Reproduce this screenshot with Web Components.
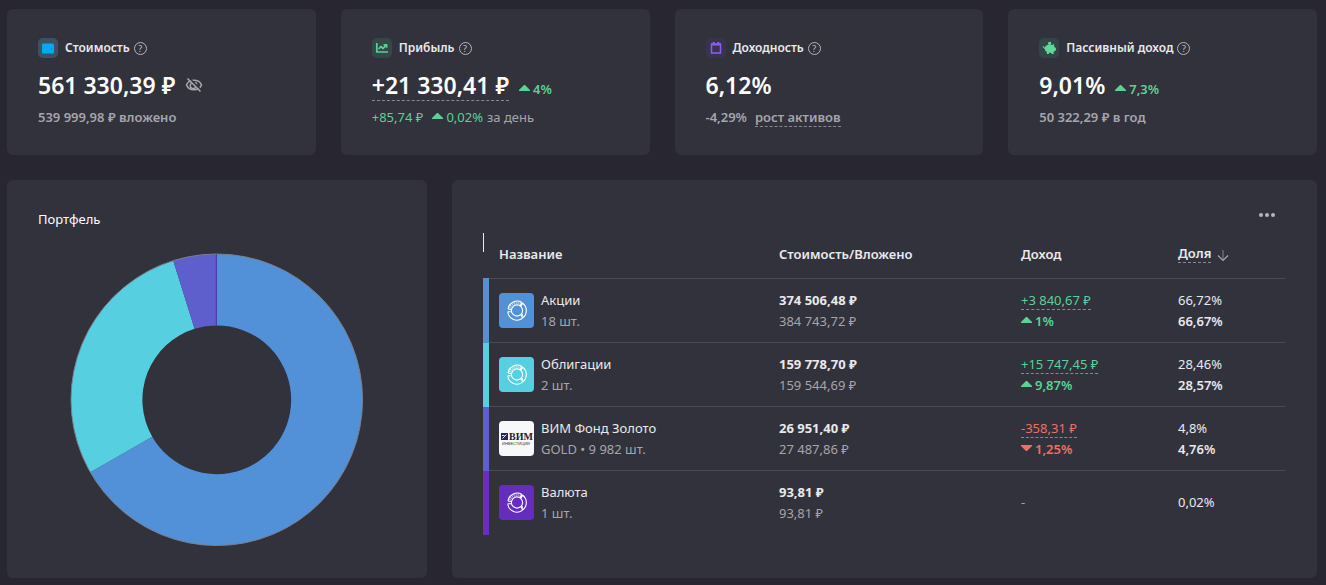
<!DOCTYPE html>
<html lang="ru">
<head>
<meta charset="utf-8">
<title>Портфель</title>
<style>
html{background:#282731}
body{margin:0;background:#282731;color:#e9e9ec;font:400 14px/20px "Noto Sans","Open Sans",sans-serif}
</style>
</head>
<body>
<portfolio-page></portfolio-page>
<script>
const define = (name, html, setup) => customElements.define(name, class extends HTMLElement {
  connectedCallback() {
    if (this.shadowRoot) return;
    const t = document.createElement('template');
    t.innerHTML = typeof html === 'function' ? html(this) : html;
    this.attachShadow({mode: 'open'}).append(t.content.cloneNode(true));
    if (setup) setup(this);
  }
});

const ICONS = {
  wallet: ['#3c5264', '<path fill="#03a9f4" d="M5 5.400h10.200v1h.8v8.400q0 .8-.8.8H4.800q-.8 0-.8-.8V6.200q0-.8 1-.8z"/><circle cx="13.500" cy="11" r=".7" fill="#2c6f93"/>'],
  chart: ['#354747', '<path fill="none" stroke="#5bd197" stroke-width="1.700" stroke-linejoin="round" d="M4.800 5v9h11.200M6.600 11l2.300-2.500 2.200 2 3-3.300M11.600 6.800h3v3"/>'],
  calendar: ['#3a3350', '<path fill="none" stroke="#8a5ff0" stroke-width="1.500" d="M5.500 6.200h9v8.800h-9z"/><path stroke="#8a5ff0" stroke-width="2" d="M5 6.500h10M7.700 4v2M12.300 4v2"/>'],
  piggy: ['#344548', '<path fill="#5fd79d" d="M7.600 7.300c1.700-.9 4-.9 5.600-.2l2-1-.2 2 .9 1.400 1 .3v2.700l-1.300.5-1 1v2h-2.200v-1.300H9.900V16H7.800v-2.100c-1.200-.8-1.900-1.800-2-3L4 9.600l-.3-1.500.9-.2.2 1.100 1.100.5c.3-.9.900-1.700 1.700-2.200z"/><circle cx="10.600" cy="5.300" r="1.600" fill="#5fd79d"/>']
};

define('metric-icon', el => {
  const [bg, art] = ICONS[el.getAttribute('name')];
  return `<style>:host{display:block;width:20px;height:20px;border-radius:5px;background:${bg}}svg{display:block}</style>
  <svg width="20" height="20" viewBox="0 0 20 20" aria-hidden="true">${art}</svg>`;
});

define('help-button', `<style>:host{display:block}
button{box-sizing:border-box;display:block;width:13px;height:13px;padding:0;border:1px solid #b4b4ba;border-radius:50%;background:none;color:#c0c0c6;font:400 9px/11px "Noto Sans",sans-serif;text-align:center}</style>
<button type="button" aria-label="Подсказка">?</button>`);

define('trend-value', el => `<style>
:host{display:inline-flex;align-items:center;gap:3px;color:#5bd197}
:host([down]){color:#ee6f67}
svg{display:block;margin-bottom:3px}</style>
<svg width="11" height="6" viewBox="0 0 11 6" aria-hidden="true"><path fill="currentColor" d="${el.hasAttribute('down') ? 'M0 0h11v1L6 6H5L0 1z' : 'M0 6h11V5L6 0H5L0 5z'}"/></svg><span><slot></slot></span>`);

define('metric-card', `<style>
:host{display:block;box-sizing:border-box;min-width:0;padding:29px 31px 28px;border-radius:6px;background:#32323c;white-space:nowrap}
header{display:flex;align-items:center;height:20px}
h2{margin:0 4px 0 7px;font:600 12px/20px "Noto Sans",sans-serif;color:#e9e9ec}
.value{display:flex;align-items:center;gap:10px;height:32px;margin-top:11px;font-size:23px;line-height:32px;font-weight:600;color:#fff}
.note{display:flex;align-items:center;height:20px;margin-top:6px;font-size:13px;color:#a5a5ad}
</style>
<header><slot name="icon"></slot><h2><slot name="title"></slot></h2><help-button></help-button></header>
<div class="value"><slot name="value"></slot></div>
<div class="note"><slot></slot></div>`);

define('donut-chart', `<style>:host{display:block}svg{display:block;width:100%;height:auto}</style>
<svg viewBox="0 0 294 294" role="img" aria-label="Структура портфеля"></svg>`, el => {
  const parts = [[66.720,'#5290d8'],[28.460,'#56d0e1'],[4.800,'#5e5ecd'],[.02,'#4f2cb0']];
  const pt = (r, p) => { const a = p / 100 * 2 * Math.PI; return (147 + r * Math.sin(a)).toFixed(2) + ' ' + (147 - r * Math.cos(a)).toFixed(2); };
  let at = 0, out = '';
  for (const [share, colour] of parts) {
    const end = at + share, big = share > 50 ? 1 : 0;
    out += `<path fill="${colour}" d="M${pt(146, at)}A146 146 0 ${big} 1 ${pt(146, end)}L${pt(74.5, end)}A74.500 74.500 0 ${big} 0 ${pt(74.5, at)}z"/>`;
    at = end;
  }
  out += '<circle cx="147" cy="147" r="146" fill="none" stroke="#77808f" stroke-width="1"/><path stroke="#4f36b5" d="M146.500 1v71.500"/>';
  el.shadowRoot.querySelector('svg').innerHTML = out;
});

define('asset-logo', el => {
  const tone = el.getAttribute('tone');
  const ring = `<g fill="none" stroke="#fff" stroke-width="1.100"><circle cx="18" cy="17.500" r="5.600"/><path d="M9 16a9.300 9.300 0 0 1 14-6.600l-2 3.400M9 16l3.500.6M8.700 18.800a9.300 9.300 0 0 0 14.500 6.700M8.700 18.800h3.600M23.800 10.200a9.300 9.300 0 0 1 0 14.600l-2-3M23.800 10.200l-2 3M23.200 25.500V21"/><path stroke-width="2.600" stroke-opacity=".6" stroke-dasharray="1 1" d="M10.800 15a7.600 7.600 0 0 1 10.700-4.300"/></g>`;
  const vim = `<path fill="#252b55" d="M2 12h7v7H2z"/><path fill="none" stroke="#dfe4ff" d="M3.500 17.500l4-4M3 14.500h2.500"/><text x="10" y="19" font-family="Liberation Serif,serif" font-weight="700" font-size="10" fill="#20222e">ВИМ</text><text x="3" y="24" font-family="Liberation Sans,sans-serif" font-size="4" fill="#30323e">ИНВЕСТИЦИИ</text>`;
  return `<style>:host{display:block;flex:none;width:35px;height:35px;border-radius:4px;background:${tone};overflow:hidden}svg{display:block}</style>
  <svg width="35" height="35" viewBox="0 0 35 35" aria-hidden="true">${el.hasAttribute('vim') ? vim : ring}</svg>`;
});

const ASSETS = [
  ['#5290d8','#5290d8','','Акции','18 шт.','374 506,48 ₽','384 743,72 ₽','+3 840,67 ₽','1%','','66,72%','66,67%'],
  ['#56d0e1','#56d0e1','','Облигации','2 шт.','159 778,70 ₽','159 544,69 ₽','+15 747,45 ₽','9,87%','','28,46%','28,57%'],
  ['#5e5ecd','#f8f8fa','vim','ВИМ Фонд Золото','GOLD • 9 982 шт.','26 951,40 ₽','27 487,86 ₽','-358,31 ₽','1,25%','down','4,8%','4,76%'],
  ['#6a2dbd','#652dbd','','Валюта','1 шт.','93,81 ₽','93,81 ₽','','','','0,02%','']
];

define('asset-table', `<style>
:host{display:block}
table{width:100%;border-collapse:collapse;table-layout:fixed}
th,td{padding:0;text-align:left;font-weight:400;white-space:nowrap}
thead th{height:34px;font-weight:600;font-size:13px;line-height:20px;vertical-align:top}
tr>:first-child{padding-left:10px}
thead tr>:first-child{padding-left:13px}
.c1{width:293px}.c2{width:242px}.c3{width:157px}
tbody tr{height:64px}
tbody td{border-top:1px solid #4a4a54;font-size:13px;line-height:21px}
tbody td:first-child{border-left:6px solid var(--tone)}
.asset{display:flex;align-items:center;gap:7px}
b{display:block;font-weight:600}
.now{font-weight:700}
.muted{color:#a5a5ad}
.line{display:block}
.under{display:inline-block;line-height:18px;border-bottom:1px dashed #888891}
.gain{color:#5bd197}.loss{color:#ee6f67}
trend-value{display:flex;font-weight:600}
button{display:flex;align-items:center;gap:6px;padding:0;border:0;background:none;color:inherit;font:inherit}
button svg{margin-top:4px}
</style>
<table><colgroup><col class="c1"><col class="c2"><col class="c3"><col></colgroup>
<thead><tr><th scope="col">Название</th><th scope="col">Стоимость/Вложено</th><th scope="col">Доход</th><th scope="col" aria-sort="descending"><button type="button"><span class="under">Доля</span><svg width="12" height="13" viewBox="0 0 12 13" fill="none" stroke="#a5a5ad" stroke-width="1.200" aria-hidden="true"><path stroke-opacity=".6" d="M6 1v10"/><path d="M1 6.500l5 5 5-5"/></svg></button></th></tr></thead>
<tbody></tbody></table>`, el => {
  el.shadowRoot.querySelector('tbody').innerHTML = ASSETS.map(([tone, bg, vim, name, count, now, paid, gain, pct, dir, share, target]) => `
  <tr style="--tone:${tone}">
    <td><div class="asset"><asset-logo tone="${bg}" ${vim}></asset-logo><div><span class="line">${name}</span><span class="line muted">${count}</span></div></div></td>
    <td><b class="now">${now}</b><span class="line muted">${paid}</span></td>
    <td>${gain ? `<span class="under ${dir ? 'loss' : 'gain'}">${gain}</span><trend-value ${dir}>${pct}</trend-value>` : '<span class="muted">-</span>'}</td>
    <td><span class="line">${share}</span>${target ? `<b>${target}</b>` : ''}</td>
  </tr>`).join('');
});

define('panel-card', `<style>
:host{display:block;box-sizing:border-box;min-width:0;border-radius:6px;background:#32323c}
</style><slot></slot>`);

define('portfolio-page', `<style>
:host{display:block;padding:9px 9px 7px 7px}
.metrics{display:grid;grid-template-columns:repeat(4,minmax(0,1fr));gap:25px}
.panels{display:grid;grid-template-columns:minmax(0,420fr) minmax(0,865fr);gap:25px;margin-top:25px}
.under{border-bottom:1px dashed #888891}
.big{line-height:30px}
.up{color:#5bd197}
.small{margin-top:8px;font-size:13px;line-height:20px;font-weight:600}
.day{margin:0 4px 0 9px}
.semi{font-weight:600}
.eye{display:block;padding:0;border:0;background:none}
.eye svg{display:block}
.note-link{margin-left:8px;line-height:18px;font-weight:600}
.portfolio{padding:29px 31px 31px}
h2{margin:0;font:400 13px/20px "Noto Sans",sans-serif;color:#fff}
donut-chart{width:82%;margin:24px auto 0}
.assets{padding:27px 32px 30px 31px}
.tools{display:flex;justify-content:flex-end;padding-right:8px}
.more{display:flex;gap:2px;padding:6px 2px;border:0;background:none}
.more i{width:4px;height:4px;border-radius:50%;background:#b4b4bc}
.caret{width:1px;height:19px;margin-top:10px;background:#e9e9ec}
asset-table{margin-top:-8px}
</style>
<section class="metrics">
<metric-card><metric-icon slot="icon" name="wallet"></metric-icon><span slot="title">Стоимость</span>
<span slot="value">561 330,39 ₽</span><button slot="value" class="eye" type="button" aria-label="Скрыть суммы"><svg width="18" height="16" viewBox="0 0 18 16" fill="none" stroke="#a5a5ad" stroke-width="1.600"><path d="M1.500 8C4 1.700 14 1.700 16.500 8 14 14.300 4 14.300 1.500 8z"/><path d="M6.500 6.200a3 3 0 1 0 4.300 4M10 5.200a3 3 0 0 1 1.800 2.300"/><path stroke="#32323c" stroke-width="1.500" d="M4 .7l12 12"/><path d="M2.500 1.500l13 13"/></svg></button>
<span class="semi">539 999,98 ₽ вложено</span></metric-card>
<metric-card><metric-icon slot="icon" name="chart"></metric-icon><span slot="title">Прибыль</span>
<span slot="value" class="under big">+21 330,41 ₽</span><trend-value slot="value" class="small">4%</trend-value>
<span class="up">+85,74 ₽</span><trend-value class="day">0,02%</trend-value><span>за день</span></metric-card>
<metric-card><metric-icon slot="icon" name="calendar"></metric-icon><span slot="title">Доходность</span>
<span slot="value">6,12%</span>
<span class="semi">-4,29%</span><span class="under note-link">рост активов</span></metric-card>
<metric-card><metric-icon slot="icon" name="piggy"></metric-icon><span slot="title">Пассивный доход</span>
<span slot="value">9,01%</span><trend-value slot="value" class="small">7,3%</trend-value>
<span class="semi">50 322,29 ₽ в год</span></metric-card>
</section>
<section class="panels">
<panel-card class="portfolio"><h2>Портфель</h2><donut-chart></donut-chart></panel-card>
<panel-card class="assets"><div class="tools"><button class="more" type="button" aria-label="Меню"><i></i><i></i><i></i></button></div><div class="caret"></div><asset-table></asset-table></panel-card>
</section>`);
</script>
</body>
</html>
